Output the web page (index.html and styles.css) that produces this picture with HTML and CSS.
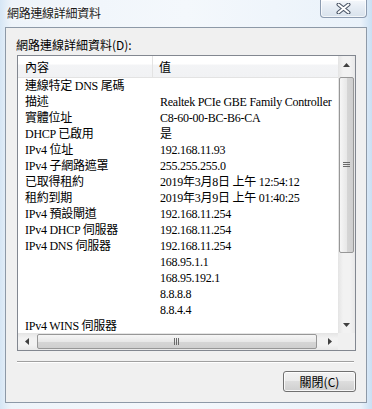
FILE: index.html
```html
<!DOCTYPE html>
<html lang="zh-Hant">
<head>
    <meta charset="UTF-8">
    <title>網路連線詳細資料</title>
    <link rel="stylesheet" href="styles.css">
</head>
<body>
    <div class="window">
        <div class="titlebar">
            <span class="title">網路連線詳細資料</span>
            <div class="close">
                <svg width="15" height="11" viewBox="0 0 15 11">
                    <path d="M2.5 1.5 L12.5 9.5 M12.5 1.5 L2.5 9.5" stroke="#4a5566" stroke-width="4" stroke-linecap="round"/>
                    <path d="M2.5 1.5 L12.5 9.5 M12.5 1.5 L2.5 9.5" stroke="#ffffff" stroke-width="2" stroke-linecap="round"/>
                </svg>
            </div>
        </div>
        <div class="client">
            <div class="label">網路連線詳細資料(D):</div>
            <div class="listview">
                <div class="content">
                    <div class="header">
                        <div class="hcell first">內容</div>
                        <div class="hcell">值</div>
                    </div>
                    <div class="rows">
                        <div class="row"><span>連線特定 DNS 尾碼</span><span></span></div>
                        <div class="row"><span>描述</span><span>Realtek PCIe GBE Family Controller</span></div>
                        <div class="row"><span>實體位址</span><span>C8-60-00-BC-B6-CA</span></div>
                        <div class="row"><span>DHCP 已啟用</span><span>是</span></div>
                        <div class="row"><span>IPv4 位址</span><span>192.168.11.93</span></div>
                        <div class="row"><span>IPv4 子網路遮罩</span><span>255.255.255.0</span></div>
                        <div class="row"><span>已取得租約</span><span>2019年3月8日 上午 12:54:12</span></div>
                        <div class="row"><span>租約到期</span><span>2019年3月9日 上午 01:40:25</span></div>
                        <div class="row"><span>IPv4 預設閘道</span><span>192.168.11.254</span></div>
                        <div class="row"><span>IPv4 DHCP 伺服器</span><span>192.168.11.254</span></div>
                        <div class="row"><span>IPv4 DNS 伺服器</span><span>192.168.11.254</span></div>
                        <div class="row"><span></span><span>168.95.1.1</span></div>
                        <div class="row"><span></span><span>168.95.192.1</span></div>
                        <div class="row"><span></span><span>8.8.8.8</span></div>
                        <div class="row"><span></span><span>8.8.4.4</span></div>
                        <div class="row"><span>IPv4 WINS 伺服器</span><span></span></div>
                    </div>
                </div>
                <div class="vscroll">
                    <div class="arrow"><svg width="7" height="4" viewBox="0 0 7 4"><path d="M0 4 L3.5 0 L7 4 Z" fill="#404040"/></svg></div>
                    <div class="track">
                        <div class="vthumb">
                            <svg width="7" height="6" viewBox="0 0 7 6"><path d="M0 0.5 H7 M0 2.5 H7 M0 4.5 H7" stroke="#6a6a6a"/></svg>
                        </div>
                    </div>
                    <div class="arrow"><svg width="7" height="4" viewBox="0 0 7 4"><path d="M0 0 L3.5 4 L7 0 Z" fill="#404040"/></svg></div>
                </div>
                <div class="hscroll">
                    <div class="arrow"><svg width="4" height="7" viewBox="0 0 4 7"><path d="M4 0 L0 3.5 L4 7 Z" fill="#404040"/></svg></div>
                    <div class="track">
                        <div class="hthumb">
                            <svg width="6" height="7" viewBox="0 0 6 7"><path d="M0.5 0 V7 M2.5 0 V7 M4.5 0 V7" stroke="#6a6a6a"/></svg>
                        </div>
                    </div>
                    <div class="arrow"><svg width="4" height="7" viewBox="0 0 4 7"><path d="M0 0 L4 3.5 L0 7 Z" fill="#404040"/></svg></div>
                </div>
                <div class="corner"></div>
            </div>
            <div class="separator"></div>
            <div class="footer">
                <button class="btn">關閉(C)</button>
            </div>
        </div>
    </div>
</body>
</html>
```

FILE: styles.css
```css
body {
    margin: 0;
    width: 372px;
    height: 409px;
    overflow: hidden;
    background: linear-gradient(90deg, #d6e6f5 0%, #eef4fa 3%, #f4f8fc 50%, #eaf2fa 97%, #c9dff3 100%);
    font-family: "Noto Sans CJK TC", "Liberation Sans", sans-serif;
    font-size: 12px;
    color: #000;
}
.window {
    display: flex;
    flex-direction: column;
    height: 409px;
}
.titlebar {
    display: flex;
    justify-content: space-between;
    align-items: flex-start;
    height: 27px;
}
.title {
    padding: 5px 0 0 7px;
    line-height: 16px;
    font-size: 12px;
    letter-spacing: -0.3px;
    color: #1a1a1a;
    text-shadow: 0 0 6px #ffffff, 0 0 3px #ffffff;
}
.close {
    display: flex;
    justify-content: center;
    align-items: center;
    width: 45px;
    height: 17px;
    margin-right: 5px;
    border: 1px solid #8c9bb0;
    border-top: none;
    border-radius: 0 0 4px 4px;
    background: linear-gradient(#f4f7fb, #e4ebf3 50%, #d8e2ec);
    box-shadow: inset 0 0 0 1px rgba(255, 255, 255, 0.7);
}
.client {
    display: flex;
    flex-direction: column;
    margin: 0 5px;
    height: 374px;
    border: 1px solid #8d99a7;
    background: #f0f0f0;
}
.label {
    padding: 8px 0 0 10px;
    line-height: 17px;
    height: 19px;
}
.listview {
    display: grid;
    grid-template-columns: 320px 17px;
    grid-template-rows: 277px 17px;
    margin-left: 11px;
    width: 337px;
    border: 1px solid #828790;
    background: #fff;
}
.content {
    overflow: hidden;
    font-family: "Liberation Serif", "Noto Sans CJK TC", serif;
}
.header {
    display: grid;
    grid-template-columns: 135px 1fr;
    height: 21px;
    border-bottom: 1px solid #e3e3e3;
    background: linear-gradient(#ffffff 0%, #ffffff 40%, #f3f4f6 41%, #f1f2f4 100%);
}
.hcell {
    padding-left: 6px;
    line-height: 22px;
    font-family: "Noto Sans CJK TC", sans-serif;
}
.hcell.first {
    padding-left: 7px;
    border-right: 1px solid #e3e3e3;
}
.row {
    display: grid;
    grid-template-columns: 135px 1fr;
    height: 16px;
    line-height: 16px;
    white-space: nowrap;
    letter-spacing: -0.25px;
}
.row span {
    padding-left: 7px;
    overflow: hidden;
}
.vscroll {
    display: flex;
    flex-direction: column;
    background: linear-gradient(90deg, #e4e4e4, #f2f2f2 30%, #f2f2f2 70%, #e8e8e8);
}
.hscroll {
    display: flex;
    background: linear-gradient(#e4e4e4, #f2f2f2 30%, #f2f2f2 70%, #e8e8e8);
}
.arrow {
    display: flex;
    justify-content: center;
    align-items: center;
    width: 17px;
    height: 17px;
    flex: none;
}
.vscroll .track {
    flex: 1;
    padding-top: 4px;
}
.hscroll .track {
    flex: 1;
    display: flex;
    align-items: center;
    padding-left: 2px;
}
.vthumb {
    display: flex;
    justify-content: center;
    align-items: center;
    width: 13px;
    height: 174px;
    margin-left: 1px;
    border: 1px solid #979797;
    border-radius: 2px;
    background: linear-gradient(90deg, #f6f6f6, #e8e8e8 50%, #d6d6d6 51%, #cfcfcf);
}
.hthumb {
    display: flex;
    justify-content: center;
    align-items: center;
    width: 278px;
    height: 13px;
    border: 1px solid #979797;
    border-radius: 2px;
    background: linear-gradient(#f6f6f6, #e8e8e8 50%, #d6d6d6 51%, #cfcfcf);
}
.corner {
    background: #f0f0f0;
}
.separator {
    margin: 10px 12px 0 11px;
    height: 1px;
    background: #a0a0a0;
    border-bottom: 1px solid #ffffff;
}
.footer {
    display: flex;
    justify-content: flex-end;
    padding: 8px 10px 0 0;
}
.btn {
    width: 73px;
    height: 21px;
    padding: 0;
    border: 1px solid #707070;
    border-radius: 3px;
    background: linear-gradient(#f2f2f2, #ebebeb 45%, #dddddd 50%, #cfcfcf);
    box-shadow: inset 0 0 0 1px rgba(255, 255, 255, 0.8);
    font-family: "Noto Sans CJK TC", "Liberation Sans", sans-serif;
    font-size: 12px;
    line-height: 17px;
    color: #000;
}
```
